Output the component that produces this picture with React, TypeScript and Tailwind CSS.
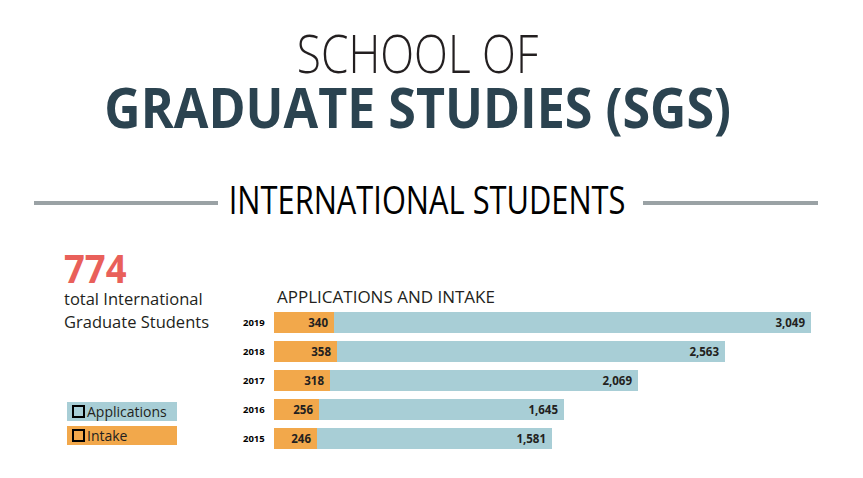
const SCALE = 0.1761

type Row = {
  year: string
  applications: number
  intake: number
}

const rows: Row[] = [
  { year: '2019', applications: 3049, intake: 340 },
  { year: '2018', applications: 2563, intake: 358 },
  { year: '2017', applications: 2069, intake: 318 },
  { year: '2016', applications: 1645, intake: 256 },
  { year: '2015', applications: 1581, intake: 246 },
]

function fmt(n: number) {
  return n.toLocaleString('en-US')
}

function Legend({ label, color }: { label: string; color: string }) {
  return (
    <div className={`flex h-[19px] w-[110px] items-center ${color}`}>
      <span className="ml-[5px] h-[13px] w-[13px] border-2 border-black" />
      <span className="ml-[2px] inline-block origin-left text-[14px] leading-[19px] text-[#231f20]">
        {label}
      </span>
    </div>
  )
}

function BarRow({ row }: { row: Row }) {
  return (
    <div className="flex h-[21px] items-center">
      <span className="w-[31px] text-[9.5px] font-bold leading-none text-black">
        {row.year}
      </span>
      <div
        className="flex h-[21px] bg-[#a8ced6]"
        style={{ width: Math.round(row.applications * SCALE) }}
      >
        <div
          className="flex h-full items-center justify-end bg-[#f2a84b] pr-[6px] text-[11.5px] font-bold text-[#231f20]"
          style={{ width: Math.round(row.intake * SCALE) }}
        >
          {row.intake}
        </div>
        <div className="flex flex-1 items-center justify-end pr-[6px] text-[11.5px] font-bold text-[#231f20]">
          {fmt(row.applications)}
        </div>
      </div>
    </div>
  )
}

export default function App() {
  return (
    <div className="h-[478px] w-[863px] overflow-hidden bg-white font-['Open_Sans',sans-serif]">
      {/* title */}
      <div className="flex flex-col items-center pr-[28px] pt-[27px]">
        <span className="inline-block origin-center scale-x-[0.835] whitespace-nowrap text-[53px] font-light leading-[51px] text-[#231f20]">
          SCHOOL OF
        </span>
        <span className="inline-block origin-center scale-x-[0.896] whitespace-nowrap text-[56px] font-bold leading-[56px] text-[#2b4350]">
          GRADUATE STUDIES (SGS)
        </span>
      </div>

      {/* section heading */}
      <div className="mt-[45px] flex items-start pl-[34px]">
        <div className="mt-[22px] h-[4px] w-[184px] bg-[#9aa2a5]" />
        <div className="ml-[12px] flex w-[395px] justify-center">
          <span className="inline-block origin-center scale-x-[0.79] whitespace-nowrap text-[39px] leading-[39px] text-black">
            INTERNATIONAL STUDENTS
          </span>
        </div>
        <div className="ml-[18px] mt-[22px] h-[4px] w-[175px] bg-[#9aa2a5]" />
      </div>

      {/* content */}
      <div className="mt-[30px] flex">
        <div className="ml-[64px] flex w-[179px] flex-col">
          <span className="inline-block origin-left scale-x-[0.91] text-[40px] font-bold leading-[39px] text-[#e9605a]">
            774
          </span>
          <p className="text-[16.5px] leading-[23px] text-[#231f20]">
            total International
            <br />
            Graduate Students
          </p>
          <div className="ml-[3px] mt-[69px] flex flex-col gap-[5px]">
            <Legend label="Applications" color="bg-[#a8ced6]" />
            <Legend label="Intake" color="bg-[#f2a84b]" />
          </div>
        </div>

        <div className="flex flex-col">
          <span className="ml-[34px] mt-[40px] whitespace-nowrap text-[17px] leading-[17px] text-[#231f20]">
            APPLICATIONS AND INTAKE
          </span>
          <div className="mt-[7px] flex flex-col gap-[8px]">
            {rows.map((r) => (
              <BarRow key={r.year} row={r} />
            ))}
          </div>
        </div>
      </div>
    </div>
  )
}
